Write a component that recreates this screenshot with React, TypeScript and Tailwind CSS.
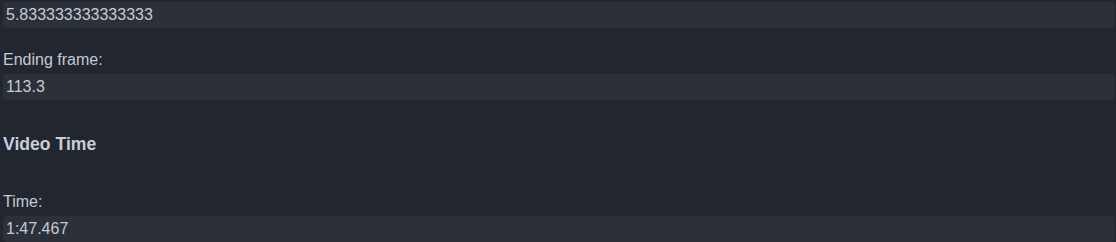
const font = { fontFamily: '"Liberation Sans", Arial, sans-serif' };

function Field({ value }: { value: string }) {
  return (
    <div className="h-[26px] rounded-[4px] bg-[#2c3139] px-[3px] text-[16px] leading-[26px] text-[#c3cad5] whitespace-nowrap overflow-hidden">
      {value}
    </div>
  );
}

function Label({ children }: { children: string }) {
  return <div className="mb-[5px] text-[16px] leading-[18px] text-[#c3cad5]">{children}</div>;
}

export default function App() {
  return (
    <div className="h-[242px] w-[1116px] overflow-hidden bg-[#22262e] pl-[3px] pr-[1px] pt-[2px]" style={font}>
      {/* Previous section tail */}
      <div className="mb-[23px]">
        <Field value="5.833333333333333" />
      </div>
      <Label>Ending frame:</Label>
      <Field value="113.3" />

      {/* Video Time */}
      <h4 className="mt-[34px] mb-[39px] text-[17.6px] font-bold leading-[20px] text-[#c6cedb]">Video Time</h4>
      <Label>Time:</Label>
      <Field value="1:47.467" />
    </div>
  );
}
